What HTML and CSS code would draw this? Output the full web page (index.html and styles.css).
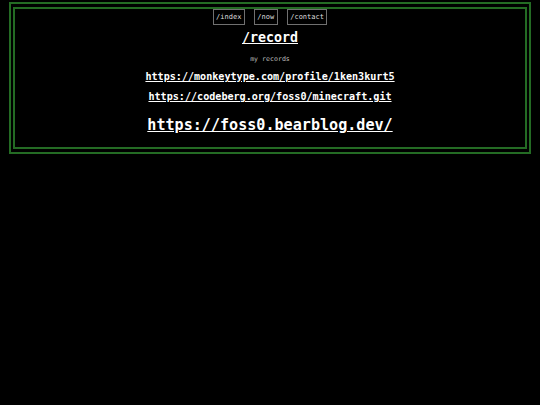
FILE: index.html
```html
<!DOCTYPE html>
<html>
<head>
<meta charset="utf-8">
<link rel="stylesheet" href="styles.css">
</head>
<body>
<div class="outer">
  <div class="inner">
    <nav class="nav">
      <a class="navlink" href="#">/index</a>
      <a class="navlink" href="#">/now</a>
      <a class="navlink" href="#">/contact</a>
    </nav>
    <h1 class="title"><a href="#">/record</a></h1>
    <p class="sub">my records</p>
    <a class="link" href="#">https://monkeytype.com/profile/1ken3kurt5</a>
    <a class="link link2" href="#">https://codeberg.org/foss0/minecraft.git</a>
    <a class="link big" href="#">https://foss0.bearblog.dev/</a>
  </div>
</div>
</body>
</html>
```
FILE: styles.css
```css
html, body {
  margin: 0;
  padding: 0;
  background: #000;
  color: #fff;
  font-family: "DejaVu Sans Mono", monospace;
}
body {
  padding: 2px 9px 0 9px;
}
.outer {
  border: 2px solid #246b24;
  padding: 3px 2px;
}
.inner {
  border: 2px solid #246b24;
  display: flex;
  flex-direction: column;
  align-items: center;
  padding: 0;
  height: 142px;
  box-sizing: border-box;
}
.nav {
  display: flex;
  gap: 9px;
  margin-top: 0;
}
.navlink {
  color: #ddd;
  text-decoration: none;
  font-size: 7px;
  border: 1px solid #707070;
  padding: 2px 2.5px;
  line-height: 10px;
}
.title {
  margin: 5px 0 0 0;
  font-size: 13.3px;
  line-height: 16px;
  font-weight: bold;
}
.title a {
  color: #fff;
}
.sub {
  margin: 9px 0 0 0;
  font-size: 6.6px;
  line-height: 9px;
  color: #bbb;
}
.link {
  color: #fff;
  font-weight: bold;
  font-size: 10.1px;
  line-height: 13px;
  margin-top: 6px;
}
.link2 {
  margin-top: 7px;
}
.big {
  font-size: 15.1px;
  line-height: 19px;
  margin-top: 13px;
}
```
